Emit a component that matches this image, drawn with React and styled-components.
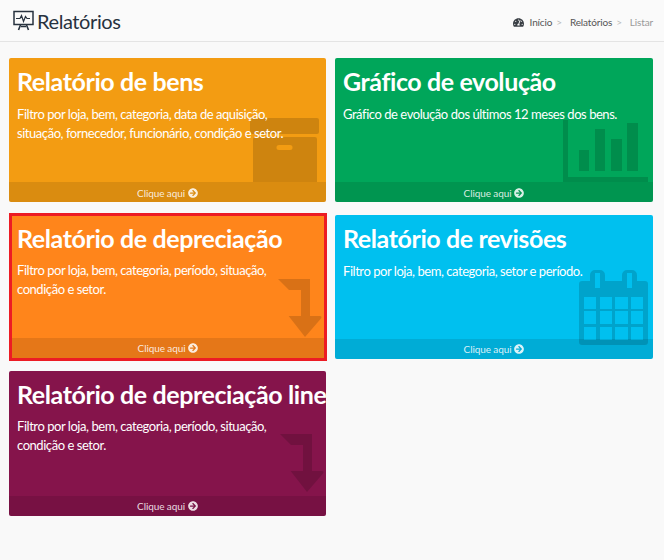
import React from "react";
import styled, { createGlobalStyle } from "styled-components";
import { FaArrowCircleRight, FaTachometerAlt } from "react-icons/fa";

const GlobalStyle = createGlobalStyle`
  html, body {
    margin: 0;
    padding: 0;
    background: #f9f9f9;
    font-family: Lato, "Liberation Sans", sans-serif;
  }
`;

const Header = styled.header`
  height: 41px;
  display: flex;
  align-items: center;
  justify-content: space-between;
  padding: 0 11px 0 13px;
  background: #fafafa;
  border-bottom: 1px solid #e4e4e4;
`;

const PageTitle = styled.h1`
  margin: 0;
  display: flex;
  align-items: center;
  gap: 2px;
  font-size: 20px;
  font-weight: 400;
  letter-spacing: -0.4px;
  color: #27323f;
`;

const Breadcrumb = styled.nav`
  display: flex;
  align-items: center;
  font-size: 10px;
  letter-spacing: -0.15px;
  margin-top: 3px;
  font-weight: 400;
`;

const Crumb = styled.span`
  color: ${props => (props.$active ? "#999" : "#555")};
`;

const Sep = styled.span`
  color: #bbb;
  margin: 0 8px 0 4px;
`;

const GaugeIcon = styled(FaTachometerAlt)`
  font-size: 11px;
  color: #3a3f45;
  margin-right: 6px;
`;

const Grid = styled.main`
  display: grid;
  grid-template-columns: 317px 318px;
  grid-auto-rows: 144.3px;
  gap: 12.4px 9px;
  padding: 16px 0 0 9px;
`;

const Card = styled.a`
  position: relative;
  display: flex;
  flex-direction: column;
  overflow: hidden;
  box-sizing: border-box;
  border-radius: 2px;
  background: ${props => props.$color};
  color: #fff;
  padding: 7px 0 0 8px;
  ${props =>
    props.$selected &&
    `
    border: 3px solid #ec1c24;
    border-radius: 0;
    margin: -2px -1px -2px 0;
    padding: 6px 0 0 5px;
  `}
`;

const Title = styled.h3`
  margin: 0;
  font-size: 25px;
  line-height: 32px;
  font-weight: 700;
  letter-spacing: -0.4px;
  white-space: nowrap;
`;

const Text = styled.p`
  margin: ${props => props.$gap}px 0 0;
  width: 280px;
  font-size: 13px;
  line-height: 19px;
  letter-spacing: -0.45px;
  position: relative;
  z-index: 1;
`;

const Footer = styled.div`
  position: absolute;
  left: 0;
  right: 0;
  bottom: 0;
  height: 20px;
  padding-top: 1px;
  box-sizing: border-box;
  display: flex;
  align-items: center;
  justify-content: center;
  gap: 3px;
  font-size: 10px;
  letter-spacing: -0.1px;
  background: rgba(0, 0, 0, 0.1);
  color: rgba(255, 255, 255, 0.85);
`;

const Watermark = styled.svg`
  position: absolute;
  right: ${props => props.$right}px;
  top: ${props => props.$top}px;
  fill: rgba(0, 0, 0, 0.15);
`;

const BoxIcon = () => (
  <Watermark $right={7} $top={60} width="69" height="64" viewBox="0 0 69 64">
    <rect x="0" y="0" width="69" height="16" rx="2" />
    <path d="M5 19h60a2 2 0 0 1 2 2v43H3V21a2 2 0 0 1 2-2zM29 27a2.5 2.5 0 0 0 0 5h11a2.5 2.5 0 0 0 0-5z" fillRule="evenodd" />
  </Watermark>
);

const ChartIcon = () => (
  <Watermark $right={5} $top={62} width="85" height="62" viewBox="0 0 85 62">
    <path d="M0 0h5v57h80v5H0z" />
    <rect x="16" y="30" width="10" height="21" />
    <rect x="32" y="9" width="10" height="42" />
    <rect x="48" y="19" width="11" height="32" />
    <rect x="64" y="3" width="11" height="48" />
  </Watermark>
);

const ArrowIcon = () => (
  <Watermark $right={2} $top={63} width="44" height="59" viewBox="0 0 44 59">
    <path d="M0 0h32v37h10c1.500 0 2 1 1 2.500L27 58l-16-20.500c-.6-.5 0-.5 1-.5h11V11H11z" />
  </Watermark>
);

const CalendarIcon = () => (
  <Watermark $right={5} $top={55} width="69" height="75" viewBox="0 0 69 75">
    <path
      fillRule="evenodd"
      d="M16 0h5a5 5 0 0 1 5 5v6h17V5a5 5 0 0 1 5-5h5a5 5 0 0 1 5 5v6h8a3 3 0 0 1 3 3v58a3 3 0 0 1-3 3H3a3 3 0 0 1-3-3V14a3 3 0 0 1 3-3h8V5a5 5 0 0 1 5-5zM16 3v15h5V3zM48 3v15h5V3zM5 27v12h12V27zM21 27v12h12V27zM36 27v12h13V27zM52 27v12h12V27zM5 41v13h12V41zM21 41v13h12V41zM36 41v13h13V41zM52 41v13h12V41zM5 57v13h12V57zM21 57v13h12V57zM36 57v13h13V57zM52 57v13h12V57z"
    />
  </Watermark>
);

const ReportIcon = () => (
  <svg width="22" height="22" viewBox="0 0 22 22" fill="none" stroke="#27323f">
    <rect x="1" y="1.500" width="19" height="13" strokeWidth="1.500" />
    <path d="M3 8.500h4l1.500-3 2 6 2-5 1.500 2h3" strokeWidth="1.200" />
    <path d="M7.500 15l-2 5M13.500 15l2 5M8 16.500h5" strokeWidth="1.600" />
  </svg>
);

const reports = [
  {
    title: "Relatório de bens",
    text: "Filtro por loja, bem, categoria, data de aquisição, situação, fornecedor, funcionário, condição e setor.",
    color: "#f39c12",
    icon: <BoxIcon />,
    gap: 8,
  },
  {
    title: "Gráfico de evolução",
    text: "Gráfico de evolução dos últimos 12 meses dos bens.",
    color: "#00a65a",
    icon: <ChartIcon />,
    gap: 8,
  },
  {
    title: "Relatório de depreciação",
    text: "Filtro por loja, bem, categoria, período, situação, condição e setor.",
    color: "#ff851b",
    icon: <ArrowIcon />,
    selected: true,
    gap: 7,
  },
  {
    title: "Relatório de revisões",
    text: "Filtro por loja, bem, categoria, setor e período.",
    color: "#00c0ef",
    icon: <CalendarIcon />,
    gap: 8,
  },
  {
    title: "Relatório de depreciação linear",
    text: "Filtro por loja, bem, categoria, período, situação, condição e setor.",
    color: "#85144b",
    icon: <ArrowIcon />,
    gap: 7,
  },
];

export default function App() {
  return (
    <>
      <GlobalStyle />
      <Header>
        <PageTitle>
          <ReportIcon />
          Relatórios
        </PageTitle>
        <Breadcrumb>
          <GaugeIcon />
          <Crumb>Início</Crumb>
          <Sep>&gt;</Sep>
          <Crumb>Relatórios</Crumb>
          <Sep>&gt;</Sep>
          <Crumb $active>Listar</Crumb>
        </Breadcrumb>
      </Header>
      <Grid>
        {reports.map(report => (
          <Card key={report.title} $color={report.color} $selected={report.selected}>
            <Title>{report.title}</Title>
            <Text $gap={report.gap}>{report.text}</Text>
            {report.icon}
            <Footer>
              Clique aqui <FaArrowCircleRight size={10} />
            </Footer>
          </Card>
        ))}
      </Grid>
    </>
  );
}
